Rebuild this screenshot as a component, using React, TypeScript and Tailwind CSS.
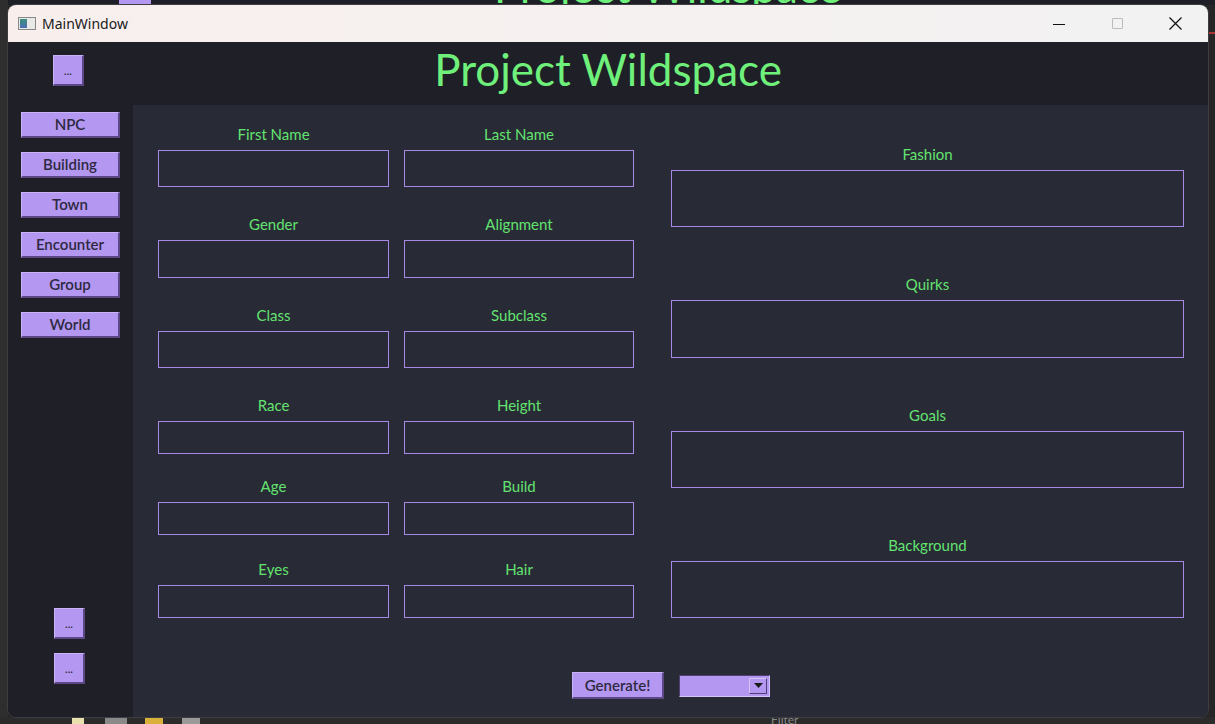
import React from "react";

const FONT = { fontFamily: "Lato, 'DejaVu Sans', sans-serif" };

const leftRows: { a: string; b: string; mt: string; h: string }[] = [
  { a: "First Name", b: "Last Name", mt: "mt-0", h: "h-[37px]" },
  { a: "Gender", b: "Alignment", mt: "mt-[29px]", h: "h-[38px]" },
  { a: "Class", b: "Subclass", mt: "mt-[29px]", h: "h-[37px]" },
  { a: "Race", b: "Height", mt: "mt-[29px]", h: "h-[33px]" },
  { a: "Age", b: "Build", mt: "mt-[24px]", h: "h-[33px]" },
  { a: "Eyes", b: "Hair", mt: "mt-[26px]", h: "h-[33px]" },
];

const rightBoxes = ["Fashion", "Quirks", "Goals", "Background"];
const navItems = ["NPC", "Building", "Town", "Encounter", "Group", "World"];

function PurpleButton({
  children,
  className,
}: {
  children: React.ReactNode;
  className: string;
}) {
  return (
    <button
      type="button"
      className={[
        "flex items-center justify-center bg-[#b497f0] border-t border-l border-t-[#c9b3f7] border-l-[#c9b3f7] border-b-2 border-r-2 border-b-[#5b4884] border-r-[#5b4884] font-semibold text-[#2d2942] leading-none",
        className,
      ].join(" ")}
    >
      {children}
    </button>
  );
}

function Field({ label, h }: { label: string; h: string }) {
  return (
    <div className="flex flex-col">
      <div className="h-4 text-center text-[15px] leading-4 text-[#63e36f]">{label}</div>
      <div className={["mt-2 border border-[#a78ae8] bg-[#282a36]", h].join(" ")} />
    </div>
  );
}

export default function App() {
  return (
    <div
      className="relative h-[724px] w-[1215px] overflow-hidden bg-[#262626]"
      style={FONT}
    >
      {/* desktop behind the window */}
      <div className="absolute left-0 top-0 h-[5px] w-full bg-[#1e1f26]" />
      <div className="absolute left-[119px] top-0 h-[5px] w-[32px] bg-[#b497f0]" />
      <div className="absolute left-[494px] top-[-36px] text-[44px] leading-none text-[#6ff07b]">
        Project Wildspace
      </div>
      <div className="absolute left-0 top-0 h-full w-[8px] bg-[#2e2e2e]" />
      <div className="absolute bottom-0 left-0 h-[7px] w-full bg-[#2b2b2b]" />
      <div className="absolute bottom-0 left-[72px] h-[6px] w-[12px] bg-[#e9e0b0]" />
      <div className="absolute bottom-0 left-[105px] h-[6px] w-[22px] bg-[#8a8a8a]" />
      <div className="absolute bottom-0 left-[145px] h-[6px] w-[18px] bg-[#d9b13a]" />
      <div className="absolute bottom-0 left-[182px] h-[6px] w-[18px] bg-[#9a9a9a]" />
      <div className="absolute bottom-[-5px] left-[771px] text-[12px] text-[#888]">Filter</div>
      <div className="absolute right-0 top-[32px] h-[2px] w-[7px] bg-[#a33]" />

      {/* window */}
      <div className="absolute left-[8px] top-[5px] flex h-[712px] w-[1200px] flex-col overflow-hidden rounded-[8px] ring-1 ring-[#3d3d42]">
        {/* title bar */}
        <div className="flex h-[37px] shrink-0 items-center bg-gradient-to-r from-[#f8efed] to-[#f2f2f2]">
          <div className="ml-[10px] flex h-[13px] w-[18px] items-center border border-[#888] bg-[#e8e8e8]">
            <div className="ml-[1px] h-[9px] w-[7px] bg-gradient-to-b from-[#3a8f7a] to-[#4d6fb3]" />
          </div>
          <span
            className="ml-[6px] text-[14px] text-[#1a1a1a]"
            style={{ fontFamily: "'Noto Sans', 'Liberation Sans', sans-serif" }}
          >
            MainWindow
          </span>
          <div className="ml-auto flex h-full items-center">
            <div className="flex h-full w-[58px] items-center justify-center">
              <div className="mt-[1px] h-px w-[12px] bg-[#111]" />
            </div>
            <div className="flex h-full w-[58px] items-center justify-center">
              <div className="h-[11px] w-[11px] rounded-[1px] border border-[#bbb]" />
            </div>
            <div className="flex h-full w-[58px] items-center justify-center">
              <svg width="13" height="13" viewBox="0 0 13 13">
                <path d="M0.5 0.5 L12.5 12.5 M12.5 0.5 L0.5 12.5" stroke="#111" strokeWidth="1.2" />
              </svg>
            </div>
            <div className="w-[4px]" />
          </div>
        </div>

        {/* header */}
        <div className="flex h-[63px] shrink-0 items-start bg-[#1e1f27]">
          <PurpleButton className="ml-[45px] mt-[13px] h-[31px] w-[31px] text-[11px]">...</PurpleButton>
          <div className="ml-[-76px] flex flex-1 justify-center pt-[3px]">
            <span className="text-[44px] leading-[48px] text-[#6ff07b]">
              Project Wildspace
            </span>
          </div>
        </div>

        <div className="flex flex-1">
          {/* sidebar */}
          <div className="flex w-[125px] shrink-0 flex-col bg-[#1e1f27] pb-[33px] pt-[7px]">
            <div className="flex flex-col gap-[14px] pl-[13px]">
              {navItems.map((n) => (
                <PurpleButton key={n} className="h-[26px] w-[99px] text-[15px]">
                  {n}
                </PurpleButton>
              ))}
            </div>
            <div className="mt-auto flex flex-col gap-[14px] pl-[46px]">
              <PurpleButton className="h-[31px] w-[31px] text-[11px]">...</PurpleButton>
              <PurpleButton className="h-[31px] w-[31px] text-[11px]">...</PurpleButton>
            </div>
          </div>

          {/* content */}
          <div className="flex flex-1 flex-col bg-[#282a36] pl-[25px] pr-[24px] pt-[21px]">
            <div className="flex">
              <div className="flex w-[476px] flex-col">
                {leftRows.map((r) => (
                  <div key={r.a} className={["grid grid-cols-[231px_230px] gap-x-[15px]", r.mt].join(" ")}>
                    <Field label={r.a} h={r.h} />
                    <Field label={r.b} h={r.h} />
                  </div>
                ))}
              </div>
              <div className="ml-[37px] flex flex-1 flex-col gap-[49px] pt-[20px]">
                {rightBoxes.map((b, i) => (
                  <Field key={b} label={b} h={i === 1 ? "h-[58px]" : "h-[57px]"} />
                ))}
              </div>
            </div>

            <div className="mt-[54px] flex items-center pl-[414px]">
              <PurpleButton className="h-[27px] w-[92px] text-[15px]">Generate!</PurpleButton>
              <div className="ml-[15px] flex h-[22px] w-[91px] items-center border border-t-[#4e3f75] border-l-[#4e3f75] border-b-[#d4c4fa] border-r-[#d4c4fa] bg-[#b497f0]">
                <div className="ml-auto mr-[2px] flex h-[16px] w-[18px] items-center justify-center border-b border-r border-b-[#4e3f75] border-r-[#4e3f75] border-t border-l border-t-[#d4c4fa] border-l-[#d4c4fa]">
                  <svg width="9" height="5" viewBox="0 0 9 5">
                    <path d="M0 0 H9 L4.5 5 Z" fill="#1b1b1b" />
                  </svg>
                </div>
              </div>
            </div>
          </div>
        </div>
      </div>
    </div>
  );
}
